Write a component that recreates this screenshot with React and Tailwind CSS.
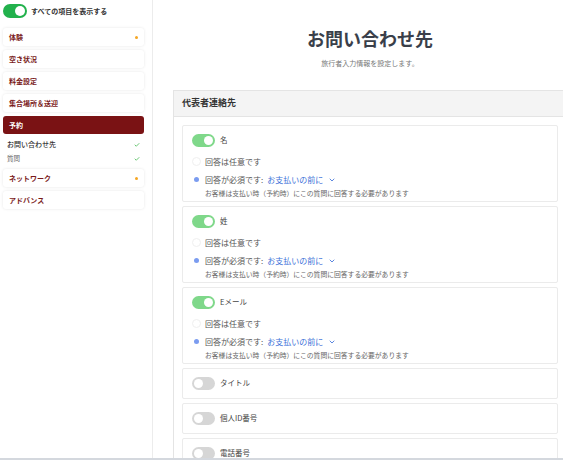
import { Check, ChevronDown } from "lucide-react";

const navItems = [
  { label: "体験", dot: true },
  { label: "空き状況" },
  { label: "料金設定" },
  { label: "集合場所＆送迎" },
];

const navAfter = [
  { label: "ネットワーク", dot: true },
  { label: "アドバンス" },
];

const Toggle = ({ on, strong }) => (
  <div
    className={`flex items-center rounded-full p-[2px] ${
      strong ? "w-[24px] h-[14px] bg-[#22b14c]" : "w-[23px] h-[13px]"
    } ${on && !strong ? "bg-[#7fd88a]" : ""} ${!on ? "bg-[#d6d6d6]" : ""} ${
      on ? "justify-end" : "justify-start"
    }`}
  >
    <div className="h-full aspect-square rounded-full bg-white" />
  </div>
);

const NavCard = ({ item }) => (
  <div className="flex items-center justify-between h-[18px] px-[6px] rounded-[3px] bg-white shadow-[0_0_3px_rgba(0,0,0,0.1)]">
    <span className="text-[7px] font-bold text-[#7a1a1a]">{item.label}</span>
    {item.dot && <span className="w-[3px] h-[3px] rounded-full bg-[#f5a623]" />}
  </div>
);

const FieldCard = ({ label, on }) => (
  <div className={`border border-[#ebebeb] rounded-[2px] bg-white px-[9px] pt-[8px] ${on ? "pb-[3px]" : "pb-[8px]"}`}>
    <div className="flex items-center gap-[5px] h-[13px]">
      <Toggle on={on} />
      <span className="text-[7.5px] text-[#444]">{label}</span>
    </div>
    {on && (
      <div className="mt-[9px]">
        <div className="flex items-center gap-[4px] h-[12px]">
          <span className="w-[9px] h-[9px] rounded-full border border-[#efefef]" />
          <span className="text-[8px] text-[#555]">回答は任意です</span>
        </div>
        <div className="flex items-center gap-[4px] h-[12px] mt-[6px]">
          <span className="w-[9px] h-[9px] flex items-center justify-center">
            <span className="w-[5px] h-[5px] rounded-full bg-[#7b9cf0]" />
          </span>
          <span className="text-[8px] text-[#555]">回答が必須です:</span>
          <span className="text-[8px] text-[#3b6fd8]">お支払いの前に</span>
          <ChevronDown className="w-[8px] h-[8px] text-[#3b6fd8] ml-[1px]" strokeWidth={2.5} />
        </div>
        <div className="text-[6.8px] text-[#666] pl-[13px] leading-[10px] mt-[2px]">
          お客様は支払い時（予約時）にこの質問に回答する必要があります
        </div>
      </div>
    )}
  </div>
);

const App = () => {
  return (
    <div className="w-[563px] h-[460px] overflow-hidden flex flex-col bg-white font-['Noto_Sans_CJK_JP',sans-serif]">
      <div className="flex flex-1 min-h-0">
        <aside className="w-[153px] shrink-0 border-r border-[#ececec] pl-[3px] pr-[8px] pt-[4px]">
          <div className="flex items-center gap-[4px]">
            <Toggle on strong />
            <span className="text-[7px] font-bold text-[#333]">すべての項目を表示する</span>
          </div>
          <div className="flex flex-col gap-[4px] mt-[10px]">
            {navItems.map((item) => (
              <NavCard key={item.label} item={item} />
            ))}
            <div className="flex items-center h-[18px] px-[6px] rounded-[3px] bg-[#7a1214]">
              <span className="text-[7px] font-bold text-white">予約</span>
            </div>
            <div className="flex flex-col pl-[4px] pr-[4px]">
              <div className="flex items-center justify-between h-[13px]">
                <span className="text-[7px] text-[#333] font-medium">お問い合わせ先</span>
                <Check className="w-[6px] h-[6px] text-[#3cb54a]" strokeWidth={3} />
              </div>
              <div className="flex items-center justify-between h-[13px] mt-[1px]">
                <span className="text-[6.5px] text-[#666]">質問</span>
                <Check className="w-[6px] h-[6px] text-[#3cb54a]" strokeWidth={3} />
              </div>
            </div>
            {navAfter.map((item) => (
              <NavCard key={item.label} item={item} />
            ))}
          </div>
        </aside>
        <main className="w-[434px] shrink-0 px-[20px]">
          <h1 className="text-center text-[18px] font-bold text-[#3a3f4a] mt-[26px] leading-[24px]">
            お問い合わせ先
          </h1>
          <p className="text-center text-[7px] text-[#777] mt-[8px]">
            旅行者入力情報を設定します。
          </p>
          <div className="mt-[21px] border border-[#e4e4e4]">
            <div className="h-[26px] bg-[#f4f4f4] border-b border-[#e4e4e4] flex items-center px-[8px]">
              <span className="text-[9px] font-bold text-[#333]">代表者連絡先</span>
            </div>
            <div className="p-[8px] flex flex-col gap-[4px]">
              <FieldCard label="名" on />
              <FieldCard label="姓" on />
              <FieldCard label="Eメール" on />
              <FieldCard label="タイトル" />
              <FieldCard label="個人ID番号" />
              <FieldCard label="電話番号" />
            </div>
          </div>
        </main>
      </div>
      <div className="h-[2px] shrink-0 bg-[#d4d8de]" />
    </div>
  );
};

export default App;
